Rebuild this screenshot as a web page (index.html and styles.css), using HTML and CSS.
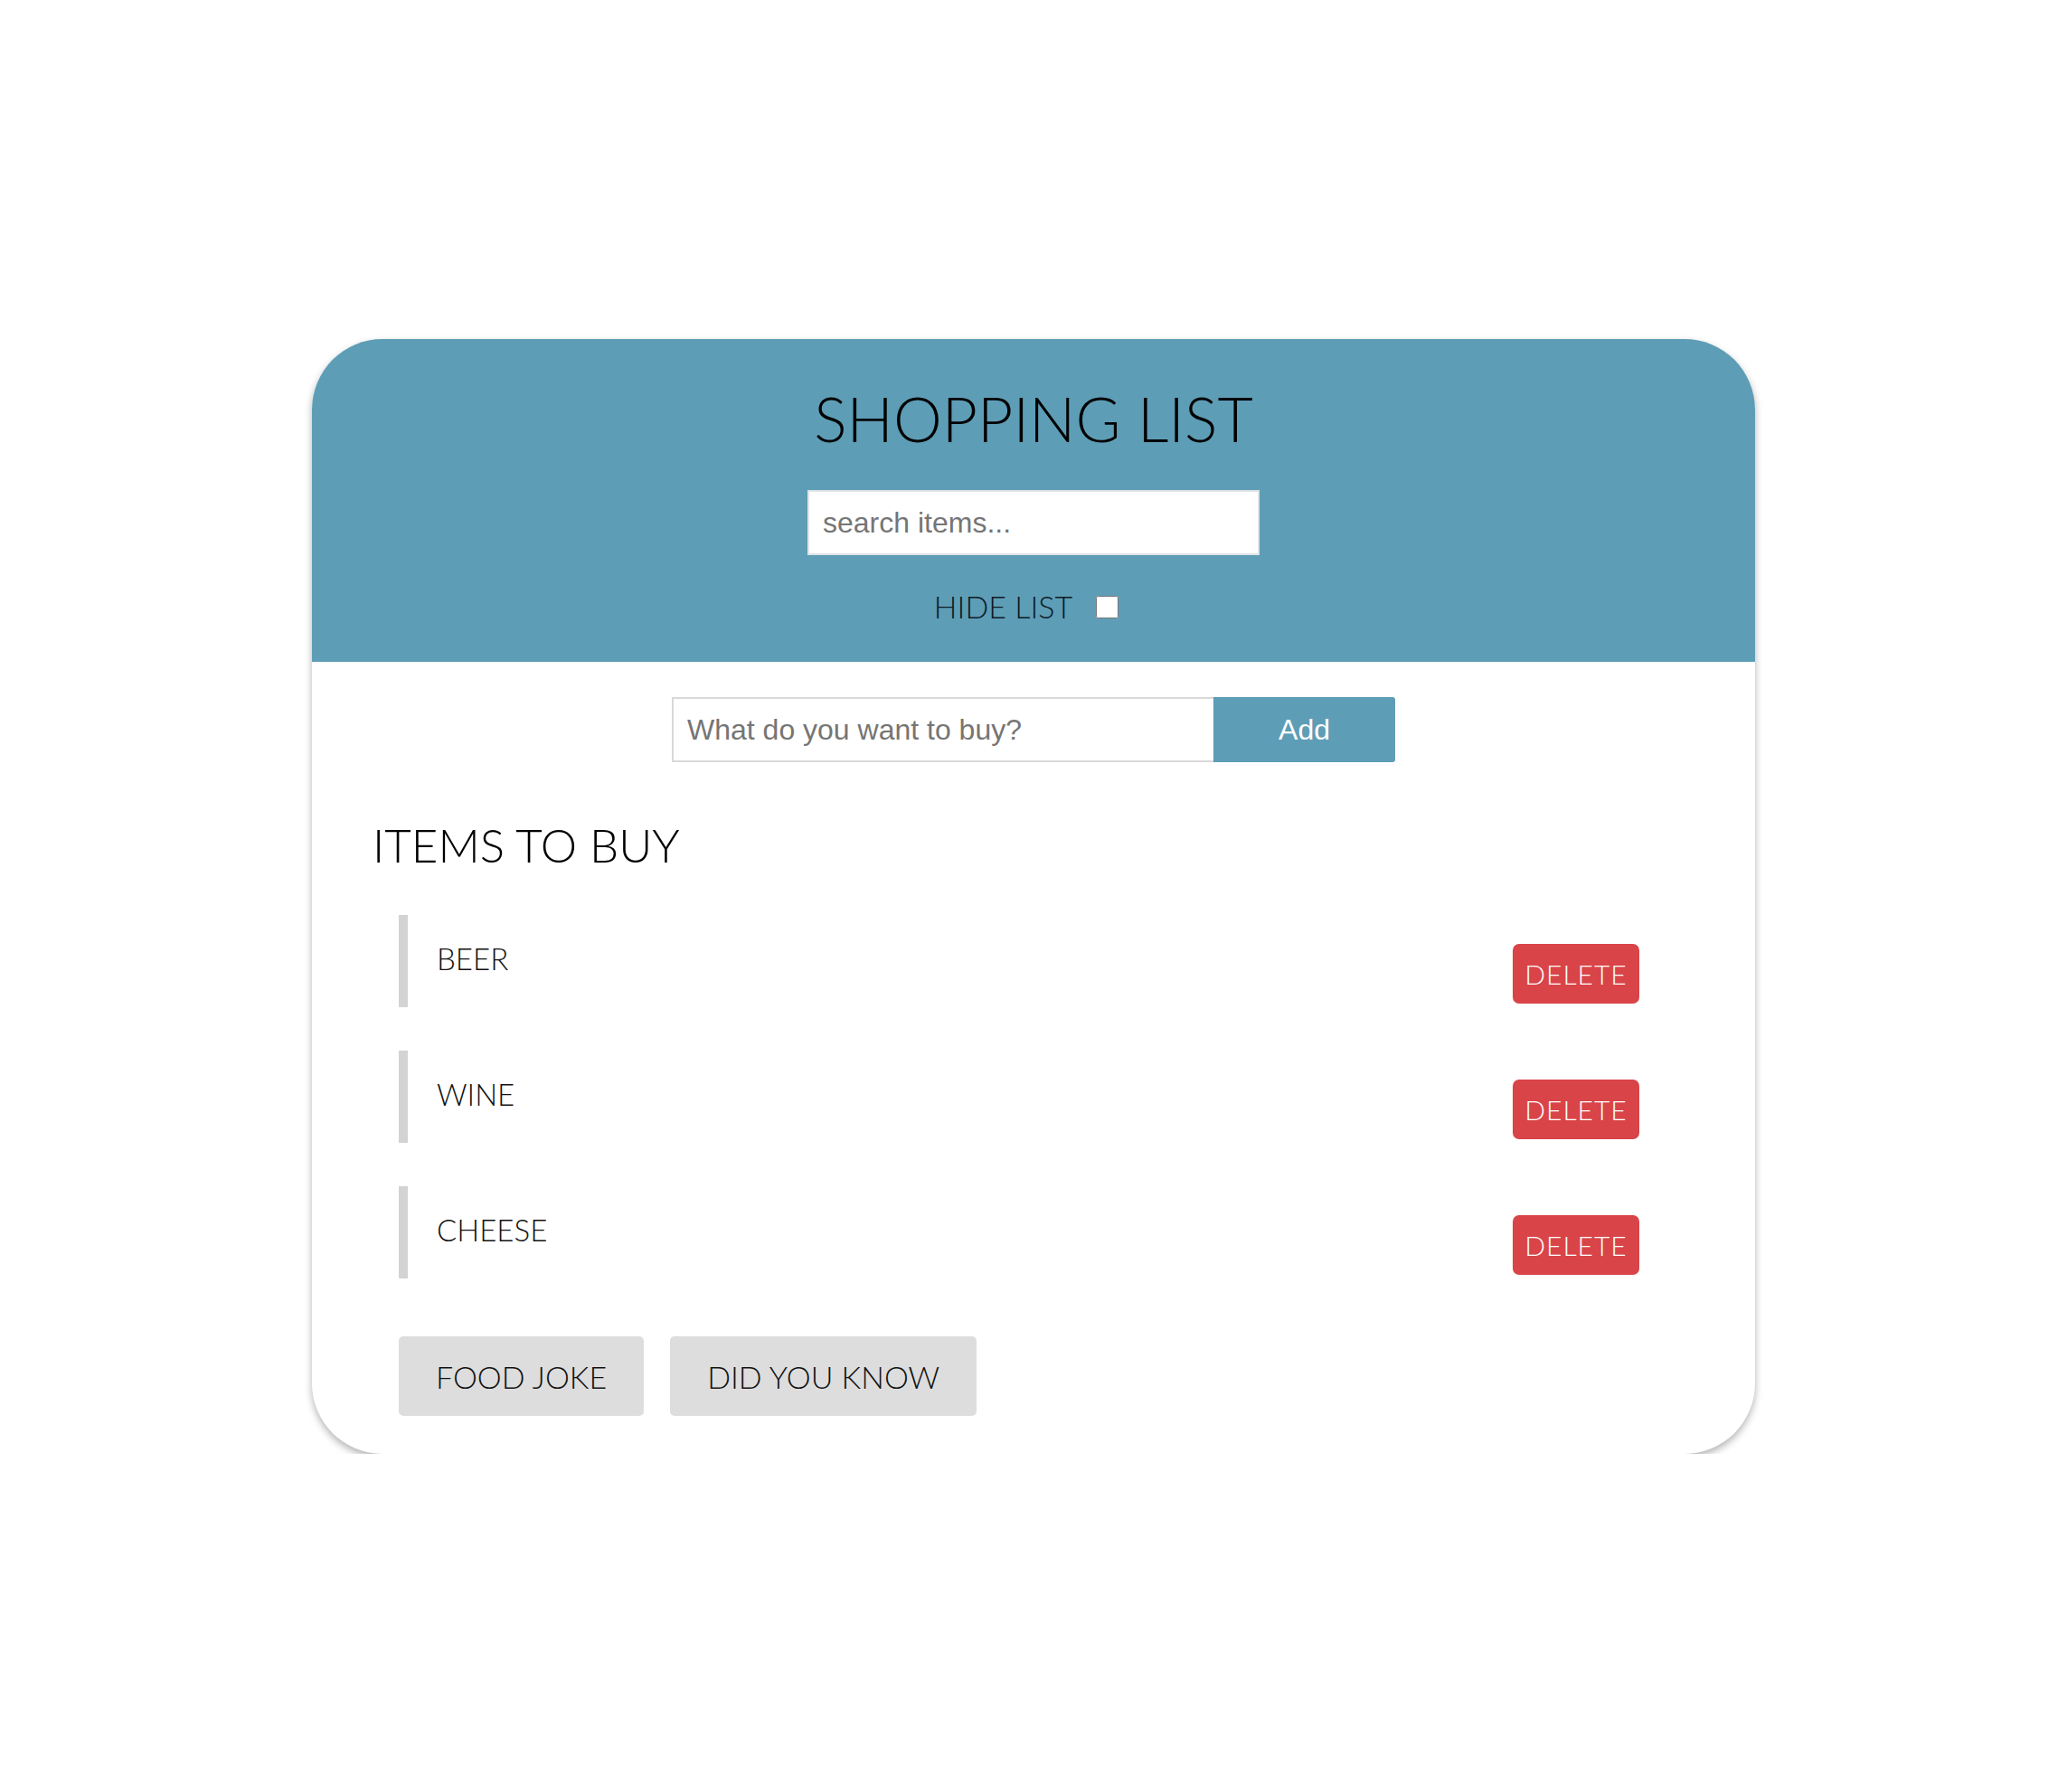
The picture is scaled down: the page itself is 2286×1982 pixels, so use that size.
FILE: index.html
```html
<!DOCTYPE html>
<html lang="en">
<head>
<meta charset="utf-8">
<title>Shopping List</title>
<link rel="stylesheet" href="styles.css">
</head>
<body>
<div class="card">
  <header class="header">
    <h1 class="title">Shopping List</h1>
    <input class="search" type="text" placeholder="search items...">
    <label class="hide">
      <span>Hide list</span>
      <input class="hide-box" type="checkbox">
    </label>
  </header>
  <main class="main">
    <form class="add-form">
      <input class="add-input" type="text" placeholder="What do you want to buy?">
      <button class="add-btn" type="button">Add</button>
    </form>
    <h2 class="sub">Items to buy</h2>
    <ul class="list">
      <li class="item"><span class="name">Beer</span><button class="del" type="button">Delete</button></li>
      <li class="item"><span class="name">Wine</span><button class="del" type="button">Delete</button></li>
      <li class="item"><span class="name">Cheese</span><button class="del" type="button">Delete</button></li>
    </ul>
    <div class="actions">
      <button class="grey" type="button">Food joke</button>
      <button class="grey" type="button">Did you know</button>
    </div>
  </main>
</div>
</body>
</html>
```
FILE: styles.css
```css
* { box-sizing: border-box; }
body {
  margin: 0;
  background: #fff;
  font-family: Lato, "Open Sans", sans-serif;
  font-weight: 300;
  color: #111;
}
.card {
  width: 1596px;
  margin: 375px auto 0;
  background: #fff;
  border-radius: 78px;
  overflow: hidden;
  box-shadow: 0 4px 8px rgba(0,0,0,0.3);
}
.header {
  background: #5e9db6;
  height: 357px;
  padding-top: 54px;
  display: flex;
  flex-direction: column;
  align-items: center;
}
.title {
  margin: 0;
  font-size: 68px;
  line-height: 1;
  font-weight: 300;
  text-transform: uppercase;
  letter-spacing: 0;
  color: #000;
}
.search {
  margin-top: 45px;
  width: 500px;
  height: 72px;
  border: 2px solid #dfe3e6;
  padding: 0 15px;
  font-family: "Liberation Sans", Arial, sans-serif;
  font-size: 32px;
  color: #333;
  outline: none;
}
.search::placeholder, .add-input::placeholder { color: #757575; }
.hide {
  margin-top: 40px;
  display: flex;
  align-items: center;
  gap: 26px;
  padding-right: 16px;
  font-size: 34px;
  line-height: 1;
  text-transform: uppercase;
  color: #0d1b24;
}
.hide-box {
  margin: 0;
  width: 25px;
  height: 25px;
}
.main {
  padding: 39px 67px 42px;
}
.add-form {
  display: flex;
  justify-content: center;
  margin: 0;
}
.add-input {
  width: 599px;
  height: 72px;
  border: 2px solid #d9d9d9;
  border-right: none;
  padding: 0 15px;
  font-family: "Liberation Sans", Arial, sans-serif;
  font-size: 32px;
  outline: none;
}
.add-btn {
  width: 201px;
  height: 72px;
  border: none;
  border-radius: 0 3px 3px 0;
  background: #5e9db6;
  color: #fff;
  font-family: "Liberation Sans", Arial, sans-serif;
  font-size: 32px;
}
.sub {
  margin: 66px 0 0;
  font-size: 51px;
  line-height: 1;
  font-weight: 300;
  text-transform: uppercase;
  letter-spacing: 0;
  color: #000;
}
.list {
  list-style: none;
  margin: 52px 29px 0;
  padding: 0;
  display: flex;
  flex-direction: column;
  gap: 48px;
}
.item {
  height: 102px;
  border-left: 10px solid #d3d3d3;
  padding-left: 32px;
  display: flex;
  justify-content: space-between;
  align-items: flex-start;
}
.name {
  margin-top: 32px;
  font-size: 33px;
  line-height: 1;
  text-transform: uppercase;
  letter-spacing: 0;
  color: #111;
}
.del {
  margin-top: 32px;
  margin-right: 32px;
  width: 140px;
  height: 66px;
  border: none;
  border-radius: 7px;
  background: #d94448;
  color: #fff;
  font-family: Lato, sans-serif;
  font-weight: 300;
  font-size: 30px;
  letter-spacing: 1px;
  text-transform: uppercase;
  padding: 0;
}
.actions {
  margin: 64px 29px 0;
  display: flex;
  gap: 29px;
}
.grey {
  height: 88px;
  padding: 0 41px;
  border: none;
  border-radius: 5px;
  background: #dddddd;
  color: #111;
  font-family: Lato, sans-serif;
  font-weight: 300;
  font-size: 34px;
  letter-spacing: 0;
  text-transform: uppercase;
}
```
